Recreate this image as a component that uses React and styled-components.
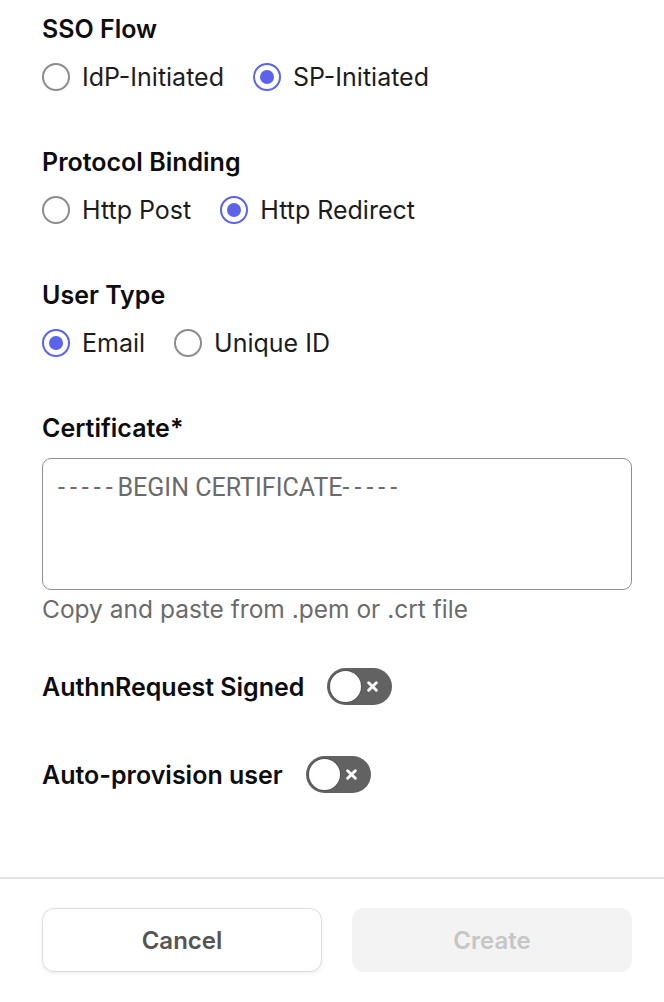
import React, { useState } from "react";
import styled, { createGlobalStyle } from "styled-components";

const GlobalStyle = createGlobalStyle`
  html, body {
    margin: 0;
    padding: 0;
    background: #ffffff;
  }
  * {
    box-sizing: border-box;
  }
`;

const Page = styled.div`
  width: 664px;
  min-height: 1002px;
  background: #fff;
  font-family: Inter, "Noto Sans", sans-serif;
  color: #111;
  display: flex;
  flex-direction: column;
`;

const Form = styled.div`
  padding: 13px 32px 0 42px;
  display: flex;
  flex-direction: column;
  flex: 1;
`;

const Section = styled.div`
  display: flex;
  flex-direction: column;
  margin-bottom: ${({ gap }) => gap || 49}px;
`;

const Label = styled.div`
  font-size: 25px;
  font-weight: 600;
  line-height: 32px;
  color: #0d0d0d;
  margin-bottom: ${({ gap }) => gap || 12}px;
`;

const RadioRow = styled.div`
  display: flex;
  align-items: center;
  gap: 29px;
`;

const RadioOption = styled.label`
  display: flex;
  align-items: center;
  gap: 12px;
  font-size: 25px;
  line-height: 40px;
  color: #1c1c1c;
  cursor: pointer;
`;

const RadioCircle = styled.span`
  width: 28px;
  height: 28px;
  border-radius: 50%;
  border: 2.5px solid ${({ checked }) => (checked ? "#5a63e9" : "#8c8c8c")};
  display: flex;
  align-items: center;
  justify-content: center;

  &::after {
    content: "";
    width: 14px;
    height: 14px;
    border-radius: 50%;
    background: #5a63e9;
    display: ${({ checked }) => (checked ? "block" : "none")};
  }
`;

const Field = styled.div`
  position: relative;
  width: 590px;
  height: 132px;
`;

const TextArea = styled.textarea`
  width: 100%;
  height: 100%;
  border: 1px solid #8f8f8f;
  border-radius: 9px;
  padding: 15px 16px;
  font-family: Roboto, "Liberation Sans", sans-serif;
  font-size: 25px;
  line-height: 30px;
  color: #333;
  resize: none;
  outline: none;
  background: transparent;
`;

const Placeholder = styled.div`
  position: absolute;
  top: 15px;
  left: 16px;
  font-family: Roboto, "Liberation Sans", sans-serif;
  font-size: 25px;
  line-height: 30px;
  color: #6b6b6b;
  pointer-events: none;
  white-space: nowrap;
`;

const Dashes = styled.span`
  letter-spacing: 5px;
`;

const Helper = styled.div`
  font-size: 24.5px;
  color: #6b6b6b;
  margin-top: 4px;
  line-height: 30px;
`;

const ToggleRow = styled.div`
  display: flex;
  align-items: center;
  gap: 23px;
  margin-bottom: ${({ gap }) => gap || 0}px;
`;

const ToggleLabel = styled.div`
  font-size: 25px;
  font-weight: 600;
  color: #0d0d0d;
`;

const Toggle = styled.button`
  position: relative;
  width: 65px;
  height: 37px;
  border-radius: 19px;
  border: none;
  padding: 0;
  background: #626262;
  cursor: pointer;
`;

const Knob = styled.span`
  position: absolute;
  top: 3px;
  left: 3px;
  width: 31px;
  height: 31px;
  border-radius: 50%;
  background: #fff;
  box-shadow: 0 0 0 1px rgba(0, 0, 0, 0.15);
`;

const CrossMark = styled.svg`
  position: absolute;
  top: 13px;
  right: 14px;
`;

const Footer = styled.div`
  border-top: 2px solid #e3e3e3;
  padding: 29px 32px 30px 42px;
  display: flex;
  gap: 30px;
`;

const Button = styled.button`
  width: 280px;
  height: 64px;
  border-radius: 12px;
  font-family: Inter, "Noto Sans", sans-serif;
  font-size: 24px;
  font-weight: 600;
  border: ${({ primary }) => (primary ? "none" : "1px solid #dcdcdc")};
  background: ${({ primary }) => (primary ? "#f3f3f3" : "#fff")};
  color: ${({ primary }) => (primary ? "#c6c6c6" : "#555")};
  box-shadow: ${({ primary }) =>
    primary ? "none" : "0 2px 4px rgba(0, 0, 0, 0.06)"};
  cursor: ${({ primary }) => (primary ? "default" : "pointer")};
`;

function RadioGroup({ options, value, onChange }) {
  return (
    <RadioRow>
      {options.map((opt) => (
        <RadioOption key={opt} onClick={() => onChange(opt)}>
          <RadioCircle checked={value === opt} />
          {opt}
        </RadioOption>
      ))}
    </RadioRow>
  );
}

function Switch({ on, onToggle }) {
  return (
    <Toggle onClick={onToggle} aria-pressed={on}>
      <Knob />
      <CrossMark width="11" height="11" viewBox="0 0 10 10">
        <path
          d="M1.5 1.5 L8.5 8.5 M8.5 1.5 L1.5 8.5"
          stroke="#fff"
          strokeWidth="2.6"
          strokeLinecap="round"
        />
      </CrossMark>
    </Toggle>
  );
}

export default function App() {
  const [flow, setFlow] = useState("SP-Initiated");
  const [binding, setBinding] = useState("Http Redirect");
  const [userType, setUserType] = useState("Email");
  const [cert, setCert] = useState("");
  const [signed, setSigned] = useState(false);
  const [autoProvision, setAutoProvision] = useState(false);

  return (
    <Page>
      <GlobalStyle />
      <Form>
        <Section>
          <Label>SSO Flow</Label>
          <RadioGroup
            options={["IdP-Initiated", "SP-Initiated"]}
            value={flow}
            onChange={setFlow}
          />
        </Section>
        <Section>
          <Label>Protocol Binding</Label>
          <RadioGroup
            options={["Http Post", "Http Redirect"]}
            value={binding}
            onChange={setBinding}
          />
        </Section>
        <Section>
          <Label>User Type</Label>
          <RadioGroup
            options={["Email", "Unique ID"]}
            value={userType}
            onChange={setUserType}
          />
        </Section>
        <Section gap={44}>
          <Label gap={14}>Certificate*</Label>
          <Field>
            <TextArea value={cert} onChange={(e) => setCert(e.target.value)} />
            {!cert && (
              <Placeholder>
                <Dashes>-----</Dashes>BEGIN CERTIFICATE<Dashes>-----</Dashes>
              </Placeholder>
            )}
          </Field>
          <Helper>Copy and paste from .pem or .crt file</Helper>
        </Section>
        <ToggleRow gap={51}>
          <ToggleLabel>AuthnRequest Signed</ToggleLabel>
          <Switch on={signed} onToggle={() => setSigned(!signed)} />
        </ToggleRow>
        <ToggleRow>
          <ToggleLabel>Auto-provision user</ToggleLabel>
          <Switch
            on={autoProvision}
            onToggle={() => setAutoProvision(!autoProvision)}
          />
        </ToggleRow>
      </Form>
      <Footer>
        <Button>Cancel</Button>
        <Button primary disabled>
          Create
        </Button>
      </Footer>
    </Page>
  );
}
